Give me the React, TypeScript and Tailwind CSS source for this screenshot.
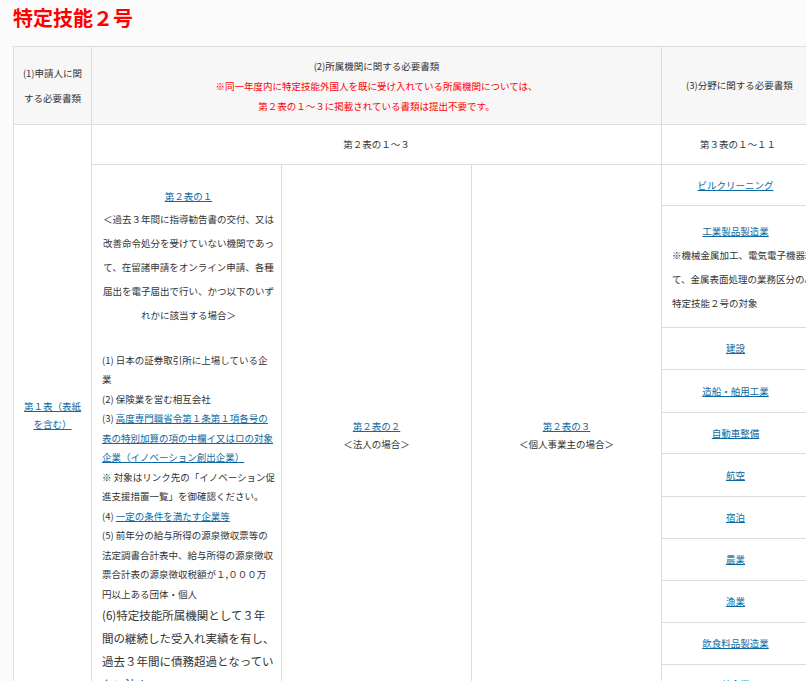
export default function App() {
  const L = "text-[#0b6aa2] underline";
  const rows: [string, number, string?][] = [
    ["ビルクリーニング", 39],
    ["工業製品製造業", 114, "※機械金属加工、電気電子機器組立て、金属表面処理の業務区分のみが特定技能２号の対象"],
    ["建設", 40],
    ["造船・舶用工業", 40],
    ["自動車整備", 39],
    ["航空", 40],
    ["宿泊", 40],
    ["農業", 39],
    ["漁業", 40],
    ["飲食料品製造業", 39],
    ["外食業", 38],
  ];
  const td = "border border-[#dddddd] align-middle text-center";
  return (
    <div className="w-[806px] h-[681px] overflow-hidden bg-[#fbfbfb] text-[#333] text-[9.5px]" style={{ fontFamily: '"Noto Sans CJK JP", "Noto Sans", sans-serif' }}>
      <h1 className="text-[#f00] font-bold text-[20px] leading-[28px] pl-[13px] pt-[4px]">特定技能２号</h1>
      <table className="ml-[13px] mt-[14px] border-collapse table-fixed w-[818px]">
        <colgroup>
          <col className="w-[78px]" /><col className="w-[190px]" /><col className="w-[190px]" /><col className="w-[190px]" /><col className="w-[170px]" />
        </colgroup>
        <tbody>
          <tr className="h-[78px] bg-[#f7f7f7]">
            <td className={`${td} leading-[25px] px-2`}>(1)申請人に関する必要書類</td>
            <td colSpan={3} className={`${td} leading-[20px]`}>
              <div>(2)所属機関に関する必要書類</div>
              <div className="text-[#f00]">※同一年度内に特定技能外国人を既に受け入れている所属機関については、</div>
              <div className="text-[#f00]">第２表の１～３に掲載されている書類は提出不要です。</div>
            </td>
            <td className={`${td} text-left pl-[24px]`}>(3)分野に関する必要書類</td>
          </tr>
          <tr className="h-[40px] bg-white">
            <td rowSpan={12} className={`${td} leading-[18px] px-2`}><span className={L}>第１表（表紙を含む）</span></td>
            <td colSpan={3} className={td}>第２表の１～３</td>
            <td className={`${td} text-left pl-[38px]`}>第３表の１～１１</td>
          </tr>
          {rows.map(([name, h, note], i) => (
            <tr key={name} className="bg-white" style={{ height: h }}>
              {i === 0 && (
                <>
                  <td rowSpan={11} className={`${td} align-top leading-[19.5px] pl-[10px] pr-[6px] pt-[22px] text-left`}>
                    <div className="text-center"><span className={L}>第２表の１</span></div>
                    <div className="text-center leading-[24px]">＜過去３年間に指導勧告書の交付、又は改善命令処分を受けていない機関であって、在留諸申請をオンライン申請、各種届出を電子届出で行い、かつ以下のいずれかに該当する場合＞</div>
                    <div className="h-[24px]" />
                    <div>(1) 日本の証券取引所に上場している企業</div>
                    <div>(2) 保険業を営む相互会社</div>
                    <div>(3) <span className={L}>高度専門職省令第１条第１項各号の表の特別加算の項の中欄イ又はロの対象企業（イノベーション創出企業）</span></div>
                    <div>※ 対象はリンク先の「イノベーション促進支援措置一覧」を御確認ください。</div>
                    <div>(4) <span className={L}>一定の条件を満たす企業等</span></div>
                    <div>(5) 前年分の給与所得の源泉徴収票等の法定調書合計表中、給与所得の源泉徴収票合計表の源泉徴収税額が１,０００万円以上ある団体・個人</div>
                    <div className="text-[11.5px] leading-[23px] pb-[8px]">(6)特定技能所属機関として３年間の継続した受入れ実績を有し、過去３年間に債務超過となっていない法人</div>
                  </td>
                  <td rowSpan={11} className={`${td} leading-[18px]`}>
                    <div><span className={L}>第２表の２</span></div>
                    <div>＜法人の場合＞</div>
                  </td>
                  <td rowSpan={11} className={`${td} leading-[18px]`}>
                    <div><span className={L}>第２表の３</span></div>
                    <div>＜個人事業主の場合＞</div>
                  </td>
                </>
              )}
              <td className={`${td} leading-[24px] pl-[10px] pr-[4px]`}>
                <div className="text-center pr-[28px]"><span className={L}>{name}</span></div>
                {note && <div className="text-left">{note}</div>}
              </td>
            </tr>
          ))}
        </tbody>
      </table>
    </div>
  );
}
